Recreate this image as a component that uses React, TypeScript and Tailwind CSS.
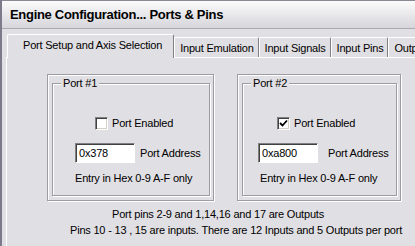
import React from 'react'

type PortProps = {
  label: string
  checked: boolean
  value: string
  width: string
  chkPad: string
  inPad: string
  entryPad: string
  addrGap: string
}

function CheckBox({ checked }: { checked: boolean }) {
  return (
    <div className="w-[13px] h-[13px] bg-white border border-t-[#808080] border-l-[#808080] border-b-white border-r-white shadow-[inset_1px_1px_0_#404040,inset_-1px_-1px_0_#d4d0c8] flex items-center justify-center">
      {checked && (
        <svg width="9" height="9" viewBox="0 0 9 9">
          <path d="M1 4 L3.5 6.5 L8 1.5" fill="none" stroke="#000" strokeWidth="1.8" />
        </svg>
      )}
    </div>
  )
}

function PortBox(p: PortProps) {
  return (
    <div
      className={`${p.width} h-[127px] border border-[#9c9ca2] shadow-[1px_1px_0_#fff,inset_1px_1px_0_#fff] pl-[4px] pr-[3px] pt-[2px] pb-[4px] flex`}
    >
      <fieldset className="flex-1 border border-[#9c9ca2] shadow-[1px_1px_0_#fff,inset_1px_1px_0_#fff] flex flex-col">
        <legend className="ml-[8px] px-[2px] leading-[13px] bg-[#e0dfe3]">{p.label}</legend>
        <div className={`flex items-center mt-[27px] ${p.chkPad}`}>
          <CheckBox checked={p.checked} />
          <span className="ml-[4px] leading-[13px]">Port Enabled</span>
        </div>
        <div className={`flex items-center mt-[13px] ${p.inPad}`}>
          <div className="w-[60px] h-[20px] bg-white border border-t-[#808080] border-l-[#808080] border-b-white border-r-white shadow-[inset_1px_1px_0_#404040] pl-[3px] flex items-center">
            {p.value}
          </div>
          <span className={`${p.addrGap} leading-[13px]`}>Port Address</span>
        </div>
        <div className={`mt-[9px] leading-[13px] ${p.entryPad}`}>Entry in Hex 0-9 A-F only</div>
      </fieldset>
    </div>
  )
}

function Tab({ children, active }: { children: React.ReactNode; active?: boolean }) {
  if (active) {
    return (
      <div className="relative z-10 -mb-px h-[24px] pl-[15px] pr-[11px] pt-[4px] bg-[#e0dfe3] border-t border-l border-white border-r border-r-[#808080] rounded-t-[2px] leading-[13px]">
        {children}
      </div>
    )
  }
  return (
    <div className="h-[20px] pl-[5px] pr-[4px] pt-[4px] bg-[#e0dfe3] border-t border-l border-white border-r border-r-[#808080] rounded-t-[2px] leading-[13px] whitespace-nowrap">
      {children}
    </div>
  )
}

export default function App() {
  return (
    <div className="w-[415px] h-[246px] overflow-hidden bg-[#e0dfe3] flex flex-col border-l-2 border-[#7b7b8c] text-[11px] tracking-[-0.2px] text-black font-['Liberation_Sans',Arial,sans-serif]">
      {/* Title bar */}
      <div className="h-[29px] shrink-0 flex items-center pl-[8px] border-t border-[#8a8a95] border-b border-b-[#a9a9b2] bg-gradient-to-b from-[#fbfbfc] to-[#d6d6db]">
        <span className="font-bold text-[13px] tracking-[-0.3px] whitespace-nowrap">
          Engine Configuration... Ports &amp; Pins
        </span>
      </div>

      <div className="flex-1 pl-[4px] pt-[5px] min-h-0">
        {/* Tabs */}
        <div className="flex items-end pl-[1px] whitespace-nowrap">
          <Tab active>Port Setup and Axis Selection</Tab>
          <Tab>Input Emulation</Tab>
          <Tab>Input Signals</Tab>
          <Tab>Input Pins</Tab>
          <Tab>Outputs</Tab>
        </div>

        {/* Panel */}
        <div className="h-full border-t border-l border-white pt-[16px] pl-[40px]">
          <div className="flex gap-[23px]">
            <PortBox
              label="Port #1"
              checked={false}
              value="0x378"
              width="w-[167px]"
              chkPad="ml-[42px]"
              inPad="ml-[22px]"
              entryPad="ml-[22px]"
              addrGap="ml-[5px]"
            />
            <PortBox
              label="Port #2"
              checked={true}
              value="0xa800"
              width="w-[164px]"
              chkPad="ml-[34px]"
              inPad="ml-[15px]"
              entryPad="ml-[17px]"
              addrGap="ml-[10px]"
            />
          </div>
          <div className="mt-[5px] ml-[65px] leading-[16px] whitespace-nowrap">
            Port pins 2-9 and 1,14,16 and 17 are Outputs
          </div>
          <div className="ml-[23px] leading-[16px] whitespace-nowrap">
            Pins 10 - 13 , 15 are inputs. There are 12 Inputs and 5 Outputs per port
          </div>
        </div>
      </div>
    </div>
  )
}
